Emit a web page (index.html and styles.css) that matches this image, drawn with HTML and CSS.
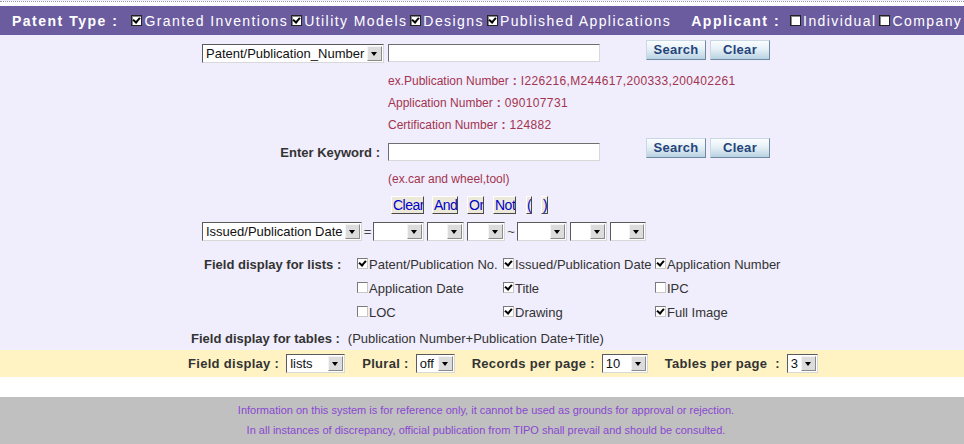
FILE: index.html
```html
<!DOCTYPE html>
<html>
<head>
<meta charset="utf-8">
<link rel="stylesheet" href="styles.css">
</head>
<body>
<div class="page">
  <div class="topline"></div>
  <div class="header">
    <span class="hlabel">Patent Type :</span>
    <span class="hitem"><span class="hcb on"></span>Granted Inventions</span>
    <span class="hitem"><span class="hcb on"></span>Utility Models</span>
    <span class="hitem"><span class="hcb on"></span>Designs</span>
    <span class="hitem"><span class="hcb on"></span>Published Applications</span>
    <span class="hlabel applicant">Applicant :</span>
    <span class="hitem"><span class="hcb"></span>Individual</span>
    <span class="hitem"><span class="hcb"></span>Company</span>
  </div>

  <div class="main">
    <div class="row row1">
      <div class="left"><span class="sel sel-type"><span class="sel-text">Patent/Publication_Number</span><span class="sel-btn"></span></span></div>
      <span class="inp"></span>
      <span class="btns"><span class="btn">Search</span><span class="btn">Clear</span></span>
    </div>
    <div class="notes">
      <div>ex.Publication Number<b class="colon">:</b><span class="num">I226216,M244617,200333,200402261</span></div>
      <div>Application Number<b class="colon">:</b><span class="num">090107731</span></div>
      <div>Certification Number<b class="colon">:</b><span class="num">124882</span></div>
    </div>
    <div class="row row2">
      <div class="left"><span class="lbl">Enter Keyword :</span></div>
      <span class="inp"></span>
      <span class="btns"><span class="btn">Search</span><span class="btn">Clear</span></span>
    </div>
    <div class="notes ex">(ex.car and wheel,tool)</div>
    <div class="ops">
      <span class="op op-clear">Clear</span>
      <span class="op op-and">And</span>
      <span class="op op-or">Or</span>
      <span class="op op-not">Not</span>
      <span class="op op-lp">(</span>
      <span class="op op-rp">)</span>
    </div>
    <div class="daterow">
      <span class="sel sel-date"><span class="sel-text">Issued/Publication Date</span><span class="sel-btn"></span></span>
      <span class="sym">=</span>
      <span class="sel sel-y"><span class="sel-text"></span><span class="sel-btn"></span></span>
      <span class="sel sel-m"><span class="sel-text"></span><span class="sel-btn"></span></span>
      <span class="sel sel-d"><span class="sel-text"></span><span class="sel-btn"></span></span>
      <span class="sym tilde">~</span>
      <span class="sel sel-y2"><span class="sel-text"></span><span class="sel-btn"></span></span>
      <span class="sel sel-m2"><span class="sel-text"></span><span class="sel-btn"></span></span>
      <span class="sel sel-d2"><span class="sel-text"></span><span class="sel-btn"></span></span>
    </div>
    <div class="fields">
      <span class="lbl">Field display for lists :</span>
      <span class="fitem"><span class="cb on"></span>Patent/Publication No.</span>
      <span class="fitem"><span class="cb on"></span>Issued/Publication Date</span>
      <span class="fitem"><span class="cb on"></span>Application Number</span>
      <span></span>
      <span class="fitem"><span class="cb"></span>Application Date</span>
      <span class="fitem"><span class="cb on"></span>Title</span>
      <span class="fitem"><span class="cb"></span>IPC</span>
      <span></span>
      <span class="fitem"><span class="cb"></span>LOC</span>
      <span class="fitem"><span class="cb on"></span>Drawing</span>
      <span class="fitem"><span class="cb on"></span>Full Image</span>
    </div>
    <div class="tables">
      <span class="lbl">Field display for tables :</span>
      <span class="tval">(Publication Number+Publication Date+Title)</span>
    </div>
  </div>

  <div class="band">
    <span class="lbl">Field display :</span>
    <span class="sel sel-lists"><span class="sel-text">lists</span><span class="sel-btn"></span></span>
    <span class="lbl g1">Plural :</span>
    <span class="sel sel-off"><span class="sel-text">off</span><span class="sel-btn"></span></span>
    <span class="lbl g1">Records per page :</span>
    <span class="sel sel-rec"><span class="sel-text">10</span><span class="sel-btn"></span></span>
    <span class="lbl g1">Tables per page &nbsp;:</span>
    <span class="sel sel-tab"><span class="sel-text">3</span><span class="sel-btn"></span></span>
  </div>
  <div class="gap"></div>
  <div class="footer">
    <div>Information on this system is for reference only, it cannot be used as grounds for approval or rejection.</div>
    <div>In all instances of discrepancy, official publication from TIPO shall prevail and should be consulted.</div>
  </div>
</div>
</body>
</html>
```
FILE: styles.css
```css
html, body {
  margin: 0;
  padding: 0;
  background: #ffffff;
}
.page {
  width: 964px;
  height: 444px;
  overflow: hidden;
  font-family: "Liberation Sans", Arial, sans-serif;
  font-size: 13px;
  color: #333333;
  background: #f0edfc;
}
.topline {
  height: 4px;
  background: #ffffff;
  border-top: 1px dotted #9a9a9a;
  margin-top: 1px;
}
.header {
  height: 29px;
  background: #6b5c9f;
  color: #ffffff;
  display: flex;
  align-items: center;
  padding-left: 12px;
  font-size: 14px;
  letter-spacing: 1.42px;
  white-space: nowrap;
}
.hlabel {
  font-weight: bold;
  letter-spacing: 1.5px;
  margin-right: 13px;
}
.hlabel.applicant {
  margin-left: 17px;
  margin-right: 10px;
}
.hitem {
  display: flex;
  align-items: center;
  margin-right: 3px;
}
.hcb {
  width: 9px;
  height: 9px;
  background: #ffffff;
  border: 1px solid #222;
  margin-right: 2px;
  position: relative;
  box-shadow: inset 1px 1px 0 #888;
}
.hcb.on::after, .cb.on::after {
  content: "";
  position: absolute;
  left: 2px;
  top: 0px;
  width: 3px;
  height: 5px;
  border-right: 2px solid #000;
  border-bottom: 2px solid #000;
  transform: rotate(40deg);
}
.main {
  padding-top: 5px;
}
.row {
  display: flex;
  align-items: flex-start;
  height: 26px;
}
.left {
  width: 384px;
  display: flex;
  justify-content: flex-end;
  flex-shrink: 0;
}
.row1 .left { margin-top: 4px; }
.inp {
  display: block;
  width: 210px;
  height: 16px;
  margin-left: 4px;
  margin-top: 4px;
  background: #ffffff;
  border: 1px solid;
  border-color: #6e6e6e #d8d8d8 #d8d8d8 #6e6e6e;
}
.row2 {
  margin-top: 2px;
  height: 24px;
}
.row2 .inp { margin-top: 5px; }
.row2 .left { margin-top: 5px; align-items: center; height: 18px; }
.lbl {
  font-weight: bold;
  white-space: nowrap;
  color: #333333;
}
.row2 .lbl { margin-right: 4px; }
.btns {
  display: flex;
  gap: 4px;
  margin-left: 46px;
}
.btn {
  display: block;
  width: 58px;
  height: 18px;
  line-height: 18px;
  text-align: center;
  font-weight: bold;
  font-size: 13px;
  color: #24447a;
  letter-spacing: 0.3px;
  border: 1px solid;
  border-color: #c8d8e4 #6f8aa0 #6f8aa0 #c8d8e4;
  background: linear-gradient(#fbfdfe 0%, #e6f0f6 45%, #b8d2e2 100%);
}
.notes {
  padding-left: 388px;
  margin-top: 4px;
  line-height: 22px;
  font-size: 12px;
  color: #a3344f;
}
.colon {
  font-weight: bold;
  margin: 0 4px 0 4px;
}
.num {
  letter-spacing: 0.35px;
}
.notes.ex {
  margin-top: 6px;
}
.ops {
  display: flex;
  padding-left: 391px;
  margin-top: 6px;
  height: 18px;
}
.op {
  display: block;
  box-sizing: border-box;
  height: 18px;
  line-height: 16px;
  font-size: 14px;
  letter-spacing: -0.5px;
  color: #0000cc;
  background: #ece9d8;
  border: 1px solid;
  border-color: #ffffff #4a4a4a #4a4a4a #ffffff;
  white-space: nowrap;
  overflow: hidden;
  padding-left: 1px;
}
.op-clear { width: 33px; margin-right: 8px; }
.op-and { width: 26px; margin-right: 9px; }
.op-or { width: 17px; margin-right: 9px; }
.op-not { width: 23px; margin-right: 10px; }
.op-lp { width: 6px; margin-right: 9px; padding-left: 0; }
.op-rp { width: 7px; padding-left: 1px; }
.daterow {
  display: flex;
  align-items: center;
  padding-left: 202px;
  margin-top: 8px;
  height: 19px;
}
.sym {
  font-size: 13px;
  color: #444;
  width: 11px;
  text-align: center;
}
.sym.tilde { width: 12px; }
.sel {
  display: flex;
  box-sizing: border-box;
  height: 19px;
  background: #ffffff;
  border: 1px solid;
  border-color: #5a5a5a #d8d8d8 #d8d8d8 #5a5a5a;
  flex-shrink: 0;
}
.sel-text {
  flex: 1;
  padding-left: 3px;
  line-height: 17px;
  font-size: 13px;
  color: #111;
  white-space: nowrap;
  overflow: hidden;
}
.sel-btn {
  width: 15px;
  height: 15px;
  margin: 1px 1px 1px 0;
  box-sizing: border-box;
  background: #dcdcdc;
  border: 1px solid;
  border-color: #f4f4f4 #8a8a8a #8a8a8a #f4f4f4;
  position: relative;
}
.sel-btn::after {
  content: "";
  position: absolute;
  left: 3px;
  top: 5px;
  border-left: 3.5px solid transparent;
  border-right: 3.5px solid transparent;
  border-top: 4px solid #000;
}
.sel-type { width: 182px; }
.sel-date { width: 160px; }
.sel-y { width: 51px; margin-right: 3px; }
.sel-m { width: 37px; margin-right: 3px; }
.sel-d { width: 38px; }
.sel-y2 { width: 50px; margin-right: 3px; }
.sel-m2 { width: 37px; margin-right: 3px; }
.sel-d2 { width: 36px; }
.fields {
  display: grid;
  grid-template-columns: 153px 146px 152px auto;
  grid-auto-rows: 24px;
  align-items: center;
  padding-left: 204px;
  margin-top: 11px;
}
.fitem {
  display: flex;
  align-items: center;
  white-space: nowrap;
  color: #333;
}
.cb {
  width: 9px;
  height: 9px;
  background: #ffffff;
  border: 1px solid;
  border-color: #7a7a7a #c8c8c8 #c8c8c8 #7a7a7a;
  margin-right: 1px;
  position: relative;
  top: -1px;
}
.tables {
  display: flex;
  align-items: center;
  height: 24px;
  padding-left: 191px;
  margin-top: 2px;
}
.tval { margin-left: 8px; }
.band {
  height: 27px;
  background: #fff3c3;
  display: flex;
  align-items: center;
  padding-left: 188px;
}
.band .lbl { letter-spacing: 0.3px; }
.band .sel { margin-left: 7px; }
.band .g1 { margin-left: 17px; }
.sel-lists { width: 59px; }
.sel-off { width: 39px; }
.sel-rec { width: 46px; }
.sel-tab { width: 31px; }
.gap {
  height: 20px;
  background: #ffffff;
}
.footer {
  height: 47px;
  box-sizing: border-box;
  padding-top: 3px;
  padding-left: 8px;
  background: #c0c0c0;
  text-align: center;
  color: #8a48d0;
  font-size: 11px;
  line-height: 20px;
  letter-spacing: 0;
}
```
